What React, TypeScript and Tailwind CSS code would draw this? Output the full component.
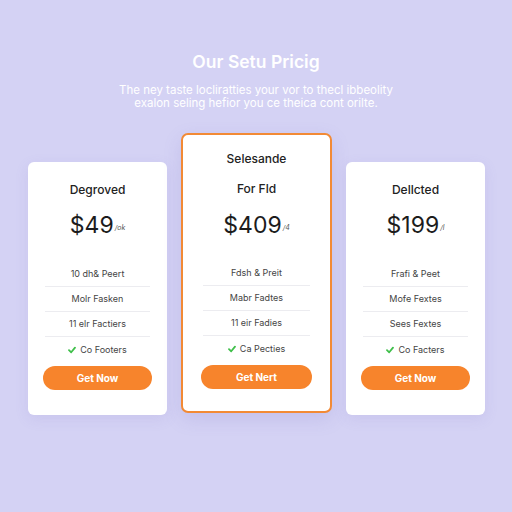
import React from 'react';

type Plan = {
  eyebrow?: string;
  name: string;
  price: string;
  per: string;
  features: string[];
  cta: string;
  featured?: boolean;
};

const plans: Plan[] = [
  {
    name: 'Degroved',
    price: '$49',
    per: '/ok',
    features: ['10 dh& Peert', 'Molr Fasken', '11 elr Factiers', 'Co Footers'],
    cta: 'Get Now',
  },
  {
    eyebrow: 'Selesande',
    name: 'For Fld',
    price: '$409',
    per: '/4',
    features: ['Fdsh & Preit', 'Mabr Fadtes', '11 eir Fadies', 'Ca Pecties'],
    cta: 'Get Nert',
    featured: true,
  },
  {
    name: 'Dellcted',
    price: '$199',
    per: '/l',
    features: ['Frafi & Peet', 'Mofe Fextes', 'Sees Fextes', 'Co Facters'],
    cta: 'Get Now',
  },
];

function Check() {
  return (
    <svg width="8" height="8" viewBox="0 0 8 8" className="mr-[4px]">
      <path d="M1 4.2 L3.2 6.3 L7 1.6" fill="none" stroke="#3fbf4a" strokeWidth="1.8" strokeLinecap="round" strokeLinejoin="round" />
    </svg>
  );
}

function PlanCard({ plan }: { plan: Plan }) {
  const shell = plan.featured
    ? 'w-[151px] rounded-[7px] border-2 border-[#f28a35] bg-white px-[18px] pt-[15px] pb-[22px] shadow-[0_6px_18px_rgba(120,110,200,0.18)]'
    : 'w-[139px] mt-[29px] rounded-[6px] bg-white px-[15px] pt-[19px] pb-[25px] shadow-[0_4px_14px_rgba(120,110,200,0.12)]';

  return (
    <div className={shell}>
      {plan.eyebrow && (
        <div className="text-center text-[12px] leading-[18px] font-medium text-[#222] mb-[12px]">
          {plan.eyebrow}
        </div>
      )}
      <div className="text-center text-[12px] leading-[18px] font-medium text-[#222]">{plan.name}</div>

      <div className={`flex items-end justify-center ${plan.featured ? 'mt-[11px]' : 'mt-[10px]'}`}>
        <span className="text-[23px] leading-[32px] text-[#1c1c1c]">{plan.price}</span>
        <span className="text-[7px] italic text-[#555] mb-[8px] ml-[1px]">{plan.per}</span>
      </div>

      <ul className={`${plan.featured ? 'mt-[20px]' : 'mt-[21px]'} mx-[2px]`}>
        {plan.features.map((f, i) => (
          <li
            key={f}
            className={`flex items-center justify-center h-[25px] text-[9px] text-[#444] ${
              i < plan.features.length - 1 ? 'border-b border-[#ececf0]' : ''
            }`}
          >
            {i === plan.features.length - 1 && <Check />}
            {f}
          </li>
        ))}
      </ul>

      <button className="mt-[4px] w-full h-[24px] rounded-full bg-[#f7842c] text-white text-[10px] font-bold">
        {plan.cta}
      </button>
    </div>
  );
}

export default function App() {
  return (
    <div
      className="w-[512px] h-[512px] bg-[#d4d2f4] pt-[50px]"
      style={{ fontFamily: 'Inter, "Noto Sans", sans-serif' }}
    >
      <h1 className="text-center text-[17.5px] leading-[24px] font-semibold text-white">Our Setu Pricig</h1>
      <p className="mt-[10px] text-center text-[11.5px] leading-[13px] text-white">
        The ney taste locliratties your vor to thecl ibbeolity
        <br />
        exalon seling hefior you ce theica cont orilte.
      </p>

      <div className="mt-[23px] flex items-start gap-[14px] pl-[28px]">
        {plans.map((p) => (
          <PlanCard key={p.name} plan={p} />
        ))}
      </div>
    </div>
  );
}
